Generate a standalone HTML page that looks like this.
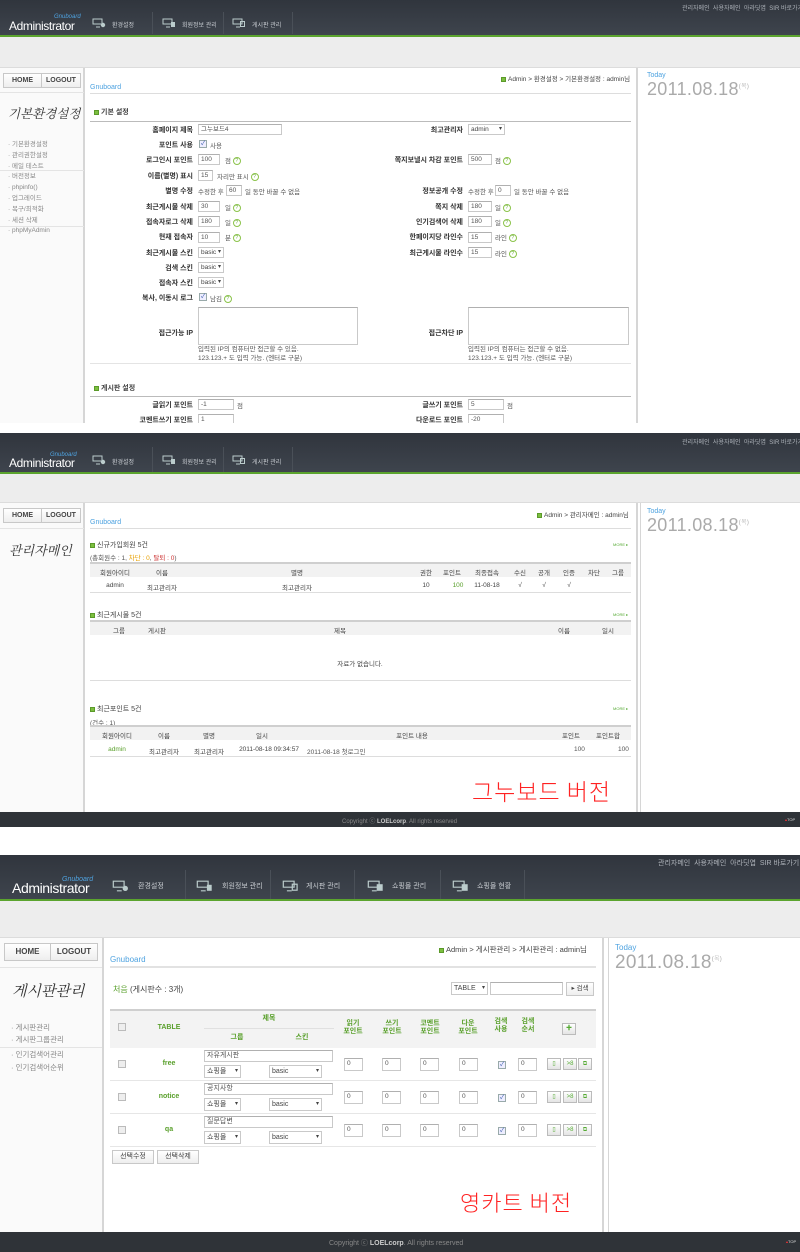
<!DOCTYPE html>
<html><head><meta charset="utf-8">
<style>
*{margin:0;padding:0;box-sizing:border-box}
body{width:800px;height:1252px;position:relative;background:#fff;font-family:"Liberation Sans","Noto Sans CJK KR",sans-serif;overflow:hidden;color:#333}
.a{position:absolute;white-space:nowrap}
.sec{position:absolute;left:0;width:800px;overflow:hidden;background:#fff}
.hd{position:absolute;left:0;top:0;width:800px;background:linear-gradient(#30353d,#3e444d);border-bottom:2px solid #5ba42e}
.band{position:absolute;left:0;width:800px;background:#ededed;border-bottom:1px solid #dcdcdc}
.tl{font-size:6px;color:#aeb3ba}
.logo{color:#fff;font-size:12px;letter-spacing:-0.4px}
.gnu{color:#4fa3e0;font-size:6px;font-style:italic}
.nv{font-size:6px;color:#c9cdd2}
.sep{position:absolute;width:1px;background:#4a5058}
.ic{position:absolute;width:14px;height:10px}
.side{position:absolute;left:0;background:#fafafa;border-right:2px solid #d6d6d6}
.btn{position:absolute;border:1px solid #c8c8c8;background:linear-gradient(#fff,#eee);font-size:7px;font-weight:bold;color:#444;text-align:center}
.cur{font-family:"Noto Serif CJK SC","Liberation Serif",serif;font-style:italic;color:#333}
.m{font-size:6.5px;color:#888}
.lab{font-size:7px;font-weight:bold;color:#333;text-align:right}
.in{position:absolute;border:1px solid #c9c9c9;border-top-color:#b0b0b0;background:#fff;font-size:6.5px;color:#555;padding-left:2px;line-height:9px;height:11px}
.t{font-size:6.5px;color:#555}
.q{display:inline-block;width:8px;height:8px;border:1px solid #8bc34a;border-radius:50%;font-size:5px;line-height:6px;text-align:center;color:#6a3;vertical-align:middle}
.cb{position:absolute;width:8px;height:8px;border:1px solid #9aa;background:#eef;font-size:6px;line-height:6px;color:#35a;text-align:center}
.sel{position:absolute;border:1px solid #c9c9c9;background:#fff;font-size:6.5px;color:#444;padding-left:2px;height:11px;line-height:9px}
.sel:after{content:"▾";position:absolute;right:2px;top:0;font-size:6px}
.hl{position:absolute;height:1px;background:#ccc}
.gb{color:#4fa3e0;font-size:7px}
.dot{display:inline-block;width:5px;height:5px;background:#7cbf3f;border:1px solid #5b9a2a;margin-right:2px;vertical-align:middle}
.bc{font-size:6.5px;color:#444}
.sh{font-size:7px;font-weight:bold;color:#444}
.today{color:#4fa3e0;font-size:7px}
.date{color:#aaa;font-weight:300;letter-spacing:0.3px}
.vb{position:absolute;width:2px;background:#d6d6d6}
.th{position:absolute;background:#f2f2f2;border-top:2px solid #cfcfcf}
.tc{font-size:6.5px;color:#444;transform:translateX(-50%)}
.ft{position:absolute;left:0;width:800px;background:#2f3338}
.red{color:#f22;font-family:"Noto Sans CJK KR",sans-serif;font-weight:300}
.g{color:#5aa02c}
.tb{font-size:7px;font-weight:bold;color:#5aa02c;transform:translateX(-50%);text-align:center;line-height:8px}
.ib{position:absolute;width:14px;height:12px;border:1px solid #bbb;background:linear-gradient(#fff,#e4e4e4);font-size:6px;text-align:center;line-height:10px;color:#5a3}
</style></head><body>

<!-- ========== SECTION 1 ========== -->
<div class="sec" style="top:0;height:423px">
 <div class="hd" style="height:37px"></div>
 <div class="a tl" style="left:682px;top:3px">관리자메인 &nbsp;사용자메인 &nbsp;아라딧엽 &nbsp;SIR 바로가기</div>
 <div class="a gnu" style="left:54px;top:14px">Gnuboard</div>
 <div class="a logo" style="left:9px;top:19px">Administrator</div>
 <svg class="ic" style="left:92px;top:18px" viewBox="0 0 14 10"><path d="M1 1h9v5H1zM4 9h4" stroke="#bcc" fill="none"/><circle cx="11" cy="7" r="2.2" fill="#bcc"/></svg>
 <div class="a nv" style="left:112px;top:20px">환경설정</div>
 <div class="sep" style="left:152px;top:12px;height:22px"></div>
 <svg class="ic" style="left:162px;top:18px" viewBox="0 0 14 10"><path d="M1 1h9v5H1zM4 9h4" stroke="#bcc" fill="none"/><rect x="9" y="4" width="4" height="5" fill="#bcc"/></svg>
 <div class="a nv" style="left:182px;top:20px">회원정보 관리</div>
 <div class="sep" style="left:223px;top:12px;height:22px"></div>
 <svg class="ic" style="left:232px;top:18px" viewBox="0 0 14 10"><path d="M1 1h9v5H1zM4 9h4" stroke="#bcc" fill="none"/><rect x="8.5" y="3.5" width="4" height="5" stroke="#bcc" fill="none"/></svg>
 <div class="a nv" style="left:252px;top:20px">게시판 관리</div>
 <div class="sep" style="left:292px;top:12px;height:22px"></div>
 <div class="band" style="top:37px;height:31px"></div>

 <div class="side" style="top:68px;width:85px;height:360px"></div>
 <div class="btn" style="left:3px;top:73px;width:39px;height:15px;line-height:13px">HOME</div>
 <div class="btn" style="left:41px;top:73px;width:40px;height:15px;line-height:13px">LOGOUT</div>
 <div class="hl" style="left:0;top:92px;width:84px;background:#e4e4e4"></div>
 <div class="a cur" style="left:8px;top:104px;font-size:12.5px">기본환경설정</div>
 <div class="a m" style="left:8px;top:139px;line-height:11px">· 기본환경설정<br>· 관리권한설정<br>· 메일 테스트</div>
 <div class="hl" style="left:0;top:170px;width:84px;background:#e4e4e4"></div>
 <div class="a m" style="left:8px;top:171px;line-height:11px">· 버전정보<br>· phpinfo()<br>· 업그레이드<br>· 복구/최적화<br>· 세션 삭제</div>
 <div class="hl" style="left:0;top:226px;width:84px;background:#e4e4e4"></div>
 <div class="a m" style="left:8px;top:227px">· phpMyAdmin</div>

 <div class="vb" style="left:636px;top:68px;height:360px"></div>
 <div class="a bc" style="left:501px;top:73px"><span class="dot"></span>Admin &gt; 환경설정 &gt; 기본환경설정 : admin님</div>
 <div class="a gb" style="left:90px;top:84px">Gnuboard</div>
 <div class="hl" style="left:90px;top:93px;width:541px;background:#ddd"></div>
 <div class="a sh" style="left:94px;top:107px"><span class="dot"></span>기본 설정</div>
 <div class="hl" style="left:90px;top:121px;width:541px;background:#bbb"></div>

 <div class="a lab" style="left:100px;width:93px;top:125px;line-height:12px">홈페이지 제목</div>
 <div class="a lab" style="left:100px;width:93px;top:140px">포인트 사용</div>
 <div class="a lab" style="left:100px;width:93px;top:155px">로그인시 포인트</div>
 <div class="a lab" style="left:100px;width:93px;top:171px">이름(별명) 표시</div>
 <div class="a lab" style="left:100px;width:93px;top:186px">별명 수정</div>
 <div class="a lab" style="left:100px;width:93px;top:202px">최근게시물 삭제</div>
 <div class="a lab" style="left:100px;width:93px;top:217px">접속자로그 삭제</div>
 <div class="a lab" style="left:100px;width:93px;top:232px">현재 접속자</div>
 <div class="a lab" style="left:100px;width:93px;top:248px">최근게시물 스킨</div>
 <div class="a lab" style="left:100px;width:93px;top:263px">검색 스킨</div>
 <div class="a lab" style="left:100px;width:93px;top:278px">접속자 스킨</div>
 <div class="a lab" style="left:100px;width:93px;top:293px">복사, 이동시 로그</div>
 <div class="a lab" style="left:100px;width:93px;top:328px">접근가능 IP</div>

 <div class="in" style="left:198px;top:124px;width:84px">그누보드4</div>
 <div class="cb" style="left:199px;top:140px">✓</div><div class="a t" style="left:210px;top:140px">사용</div>
 <div class="in" style="left:198px;top:154px;width:22px">100</div><div class="a t" style="left:225px;top:155px">점 <span class="q">?</span></div>
 <div class="in" style="left:198px;top:170px;width:15px">15</div><div class="a t" style="left:217px;top:171px">자리만 표시 <span class="q">?</span></div>
 <div class="a t" style="left:198px;top:186px">수정한 후</div><div class="in" style="left:226px;top:185px;width:16px">60</div><div class="a t" style="left:245px;top:186px">일 동안 바꿀 수 없음</div>
 <div class="in" style="left:198px;top:201px;width:22px">30</div><div class="a t" style="left:225px;top:202px">일 <span class="q">?</span></div>
 <div class="in" style="left:198px;top:216px;width:22px">180</div><div class="a t" style="left:225px;top:217px">일 <span class="q">?</span></div>
 <div class="in" style="left:198px;top:232px;width:22px">10</div><div class="a t" style="left:225px;top:232px">분 <span class="q">?</span></div>
 <div class="sel" style="left:198px;top:247px;width:26px">basic</div>
 <div class="sel" style="left:198px;top:262px;width:26px">basic</div>
 <div class="sel" style="left:198px;top:277px;width:26px">basic</div>
 <div class="cb" style="left:199px;top:293px">✓</div><div class="a t" style="left:210px;top:293px">남김 <span class="q">?</span></div>
 <div class="in" style="left:198px;top:307px;width:160px;height:38px"></div>
 <div class="a t" style="left:198px;top:345px;line-height:9px">입력된 IP의 컴퓨터만 접근할 수 있음.<br>123.123.+ 도 입력 가능. (엔터로 구분)</div>

 <div class="a lab" style="left:350px;width:113px;top:125px">최고관리자</div>
 <div class="a lab" style="left:350px;width:113px;top:155px">쪽지보낼시 차감 포인트</div>
 <div class="a lab" style="left:350px;width:113px;top:186px">정보공개 수정</div>
 <div class="a lab" style="left:350px;width:113px;top:202px">쪽지 삭제</div>
 <div class="a lab" style="left:350px;width:113px;top:217px">인기검색어 삭제</div>
 <div class="a lab" style="left:350px;width:113px;top:232px">한페이지당 라인수</div>
 <div class="a lab" style="left:350px;width:113px;top:248px">최근게시물 라인수</div>
 <div class="a lab" style="left:350px;width:113px;top:328px">접근차단 IP</div>
 <div class="sel" style="left:468px;top:124px;width:37px">admin</div>
 <div class="in" style="left:468px;top:154px;width:24px">500</div><div class="a t" style="left:495px;top:155px">점 <span class="q">?</span></div>
 <div class="a t" style="left:468px;top:186px">수정한 후</div><div class="in" style="left:495px;top:185px;width:16px">0</div><div class="a t" style="left:514px;top:186px">일 동안 바꿀 수 없음</div>
 <div class="in" style="left:468px;top:201px;width:24px">180</div><div class="a t" style="left:495px;top:202px">일 <span class="q">?</span></div>
 <div class="in" style="left:468px;top:216px;width:24px">180</div><div class="a t" style="left:495px;top:217px">일 <span class="q">?</span></div>
 <div class="in" style="left:468px;top:232px;width:24px">15</div><div class="a t" style="left:495px;top:232px">라인 <span class="q">?</span></div>
 <div class="in" style="left:468px;top:247px;width:24px">15</div><div class="a t" style="left:495px;top:248px">라인 <span class="q">?</span></div>
 <div class="in" style="left:468px;top:307px;width:161px;height:38px"></div>
 <div class="a t" style="left:468px;top:345px;line-height:9px">입력된 IP의 컴퓨터는 접근할 수 없음.<br>123.123.+ 도 입력 가능. (엔터로 구분)</div>

 <div class="hl" style="left:90px;top:363px;width:541px;background:#e4e4e4"></div>
 <div class="a sh" style="left:94px;top:383px"><span class="dot"></span>게시판 설정</div>
 <div class="hl" style="left:90px;top:396px;width:541px;background:#bbb"></div>
 <div class="a lab" style="left:100px;width:93px;top:400px">글읽기 포인트</div>
 <div class="in" style="left:198px;top:399px;width:36px">-1</div><div class="a t" style="left:237px;top:400px">점</div>
 <div class="a lab" style="left:100px;width:93px;top:415px">코멘트쓰기 포인트</div>
 <div class="in" style="left:198px;top:414px;width:36px">1</div>
 <div class="a lab" style="left:350px;width:113px;top:400px">글쓰기 포인트</div>
 <div class="in" style="left:468px;top:399px;width:36px">5</div><div class="a t" style="left:507px;top:400px">점</div>
 <div class="a lab" style="left:350px;width:113px;top:415px">다운로드 포인트</div>
 <div class="in" style="left:468px;top:414px;width:36px">-20</div>

 <div class="a today" style="left:647px;top:72px">Today</div>
 <div class="a date" style="left:647px;top:79px;font-size:18px">2011.08.18<sup style="font-size:6px">(목)</sup></div>
</div>

<!-- ========== SECTION 2 ========== -->
<div class="sec" style="top:433px;height:394px">
 <div class="hd" style="height:41px"></div>
 <div class="a tl" style="left:682px;top:4px">관리자메인 &nbsp;사용자메인 &nbsp;아라딧엽 &nbsp;SIR 바로가기</div>
 <div class="a gnu" style="left:50px;top:19px">Gnuboard</div>
 <div class="a logo" style="left:9px;top:23px">Administrator</div>
 <svg class="ic" style="left:92px;top:22px" viewBox="0 0 14 10"><path d="M1 1h9v5H1zM4 9h4" stroke="#bcc" fill="none"/><circle cx="11" cy="7" r="2.2" fill="#bcc"/></svg>
 <div class="a nv" style="left:112px;top:24px">환경설정</div>
 <div class="sep" style="left:152px;top:14px;height:25px"></div>
 <svg class="ic" style="left:162px;top:22px" viewBox="0 0 14 10"><path d="M1 1h9v5H1zM4 9h4" stroke="#bcc" fill="none"/><rect x="9" y="4" width="4" height="5" fill="#bcc"/></svg>
 <div class="a nv" style="left:182px;top:24px">회원정보 관리</div>
 <div class="sep" style="left:223px;top:14px;height:25px"></div>
 <svg class="ic" style="left:232px;top:22px" viewBox="0 0 14 10"><path d="M1 1h9v5H1zM4 9h4" stroke="#bcc" fill="none"/><rect x="8.5" y="3.5" width="4" height="5" stroke="#bcc" fill="none"/></svg>
 <div class="a nv" style="left:252px;top:24px">게시판 관리</div>
 <div class="sep" style="left:292px;top:14px;height:25px"></div>
 <div class="band" style="top:41px;height:29px"></div>

 <div class="side" style="top:70px;width:85px;height:310px"></div>
 <div class="btn" style="left:3px;top:75px;width:39px;height:15px;line-height:13px">HOME</div>
 <div class="btn" style="left:41px;top:75px;width:40px;height:15px;line-height:13px">LOGOUT</div>
 <div class="hl" style="left:0;top:95px;width:84px;background:#e4e4e4"></div>
 <div class="a cur" style="left:9px;top:107px;font-size:13px">관리자메인</div>
 <div class="vb" style="left:636px;top:70px;height:310px"></div>
 <div class="vb" style="left:640px;top:70px;height:310px;width:1px"></div>

 <div class="a bc" style="left:537px;top:76px"><span class="dot"></span>Admin &gt; 관리자메인 : admin님</div>
 <div class="a gb" style="left:90px;top:86px">Gnuboard</div>
 <div class="hl" style="left:90px;top:95px;width:541px;background:#ddd"></div>

 <div class="a sh" style="left:90px;top:107px;font-weight:normal"><span class="dot"></span>신규가입회원 5건</div>
 <div class="a" style="left:613px;top:109px;font-size:4px;color:#5a3">MORE ▸</div>
 <div class="a t" style="left:90px;top:119px">(총회원수 : 1, <span style="color:#e8a000">차단 : 0</span>, <span style="color:#c33">탈퇴 : 0</span>)</div>
 <div class="th" style="left:90px;top:129px;width:541px;height:15px"></div>
 <div class="a tc" style="left:115px;top:134px">회원아이디</div><div class="a tc" style="left:162px;top:134px">이름</div><div class="a tc" style="left:297px;top:134px">별명</div><div class="a tc" style="left:426px;top:134px">권한</div><div class="a tc" style="left:452px;top:134px">포인트</div><div class="a tc" style="left:487px;top:134px">최종접속</div><div class="a tc" style="left:520px;top:134px">수신</div><div class="a tc" style="left:544px;top:134px">공개</div><div class="a tc" style="left:569px;top:134px">인증</div><div class="a tc" style="left:594px;top:134px">차단</div><div class="a tc" style="left:618px;top:134px">그룹</div>
 <div class="a tc" style="left:115px;top:149px">admin</div><div class="a tc" style="left:162px;top:149px">최고관리자</div><div class="a tc" style="left:297px;top:149px">최고관리자</div><div class="a tc" style="left:426px;top:149px">10</div><div class="a tc g" style="left:458px;top:149px;color:#5aa02c">100</div><div class="a tc" style="left:487px;top:149px">11-08-18</div><div class="a tc" style="left:520px;top:149px">√</div><div class="a tc" style="left:544px;top:149px">√</div><div class="a tc" style="left:569px;top:149px">√</div>
 <div class="hl" style="left:90px;top:159px;width:541px;background:#ddd"></div>

 <div class="a sh" style="left:90px;top:177px;font-weight:normal"><span class="dot"></span>최근게시물 5건</div>
 <div class="a" style="left:613px;top:179px;font-size:4px;color:#5a3">MORE ▸</div>
 <div class="th" style="left:90px;top:187px;width:541px;height:15px"></div>
 <div class="a tc" style="left:119px;top:192px">그룹</div><div class="a tc" style="left:157px;top:192px">게시판</div><div class="a tc" style="left:340px;top:192px">제목</div><div class="a tc" style="left:564px;top:192px">이름</div><div class="a tc" style="left:608px;top:192px">일시</div>
 <div class="a tc" style="left:360px;top:225px">자료가 없습니다.</div>
 <div class="hl" style="left:90px;top:247px;width:541px;background:#ddd"></div>

 <div class="a sh" style="left:90px;top:271px;font-weight:normal"><span class="dot"></span>최근포인트 5건</div>
 <div class="a" style="left:613px;top:273px;font-size:4px;color:#5a3">MORE ▸</div>
 <div class="a t" style="left:90px;top:284px">(건수 : 1)</div>
 <div class="th" style="left:90px;top:292px;width:541px;height:15px"></div>
 <div class="a tc" style="left:117px;top:297px">회원아이디</div><div class="a tc" style="left:164px;top:297px">이름</div><div class="a tc" style="left:209px;top:297px">별명</div><div class="a tc" style="left:262px;top:297px">일시</div><div class="a tc" style="left:412px;top:297px">포인트 내용</div><div class="a tc" style="left:571px;top:297px">포인트</div><div class="a tc" style="left:608px;top:297px">포인트합</div>
 <div class="a tc g" style="left:117px;top:313px;color:#5aa02c">admin</div><div class="a tc" style="left:164px;top:313px">최고관리자</div><div class="a tc" style="left:209px;top:313px">최고관리자</div><div class="a tc" style="left:269px;top:313px">2011-08-18 09:34:57</div><div class="a t" style="left:307px;top:313px">2011-08-18 첫로그인</div><div class="a t" style="left:574px;top:313px">100</div><div class="a t" style="left:618px;top:313px">100</div>
 <div class="hl" style="left:90px;top:323px;width:541px;background:#ddd"></div>

 <div class="a red" style="left:472px;top:340px;font-size:23px;letter-spacing:1px">그누보드 버전</div>

 <div class="a today" style="left:647px;top:75px">Today</div>
 <div class="a date" style="left:647px;top:82px;font-size:18px">2011.08.18<sup style="font-size:6px">(목)</sup></div>
 <div class="ft" style="top:379px;height:15px"></div>
 <div class="a" style="left:342px;top:383px;font-size:6px;color:#888">Copyright ⓒ <b style="color:#ccc">LOELcorp</b>. All rights reserved</div>
 <div class="a" style="left:785px;top:384px;font-size:4px;color:#ddd"><span style="color:#f33">▴</span>TOP</div>
</div>

<!-- ========== SECTION 3 ========== -->
<div class="sec" style="top:855px;height:397px">
 <div class="hd" style="height:46px"></div>
 <div class="a tl" style="left:658px;top:3px;font-size:7px">관리자메인 &nbsp;사용자메인 &nbsp;아라딧엽 &nbsp;SIR 바로가기</div>
 <div class="a gnu" style="left:62px;top:21px;font-size:7px">Gnuboard</div>
 <div class="a logo" style="left:12px;top:25px;font-size:14px">Administrator</div>
 <svg class="ic" style="left:112px;top:25px;width:17px;height:12px" viewBox="0 0 14 10"><path d="M1 1h9v5H1zM4 9h4" stroke="#bcc" fill="none"/><circle cx="11" cy="7" r="2.2" fill="#bcc"/></svg>
 <div class="a nv" style="left:138px;top:26px;font-size:7px">환경설정</div>
 <div class="sep" style="left:185px;top:15px;height:29px"></div>
 <svg class="ic" style="left:196px;top:25px;width:17px;height:12px" viewBox="0 0 14 10"><path d="M1 1h9v5H1zM4 9h4" stroke="#bcc" fill="none"/><rect x="9" y="4" width="4" height="5" fill="#bcc"/></svg>
 <div class="a nv" style="left:222px;top:26px;font-size:7px">회원정보 관리</div>
 <div class="sep" style="left:270px;top:15px;height:29px"></div>
 <svg class="ic" style="left:282px;top:25px;width:17px;height:12px" viewBox="0 0 14 10"><path d="M1 1h9v5H1zM4 9h4" stroke="#bcc" fill="none"/><rect x="8.5" y="3.5" width="4" height="5" stroke="#bcc" fill="none"/></svg>
 <div class="a nv" style="left:306px;top:26px;font-size:7px">게시판 관리</div>
 <div class="sep" style="left:354px;top:15px;height:29px"></div>
 <svg class="ic" style="left:367px;top:25px;width:17px;height:12px" viewBox="0 0 14 10"><path d="M1 1h9v5H1zM4 9h4" stroke="#bcc" fill="none"/><rect x="8" y="3.5" width="5" height="5.5" fill="#bcc"/></svg>
 <div class="a nv" style="left:392px;top:26px;font-size:7px">쇼핑몰 관리</div>
 <div class="sep" style="left:440px;top:15px;height:29px"></div>
 <svg class="ic" style="left:452px;top:25px;width:17px;height:12px" viewBox="0 0 14 10"><path d="M1 1h9v5H1zM4 9h4" stroke="#bcc" fill="none"/><rect x="8" y="3.5" width="5" height="5.5" fill="#bcc"/></svg>
 <div class="a nv" style="left:477px;top:26px;font-size:7px">쇼핑몰 현황</div>
 <div class="sep" style="left:524px;top:15px;height:29px"></div>
 <div class="band" style="top:46px;height:37px"></div>

 <div class="side" style="top:83px;width:104px;height:300px"></div>
 <div class="btn" style="left:4px;top:88px;width:47px;height:18px;line-height:16px;font-size:8px">HOME</div>
 <div class="btn" style="left:50px;top:88px;width:48px;height:18px;line-height:16px;font-size:8px">LOGOUT</div>
 <div class="hl" style="left:0;top:112px;width:102px;background:#e4e4e4"></div>
 <div class="a cur" style="left:12px;top:125px;font-size:15px">게시판관리</div>
 <div class="a m" style="left:11px;top:167px;line-height:12px;font-size:7.5px">· 게시판관리<br>· 게시판그룹관리</div>
 <div class="hl" style="left:0;top:192px;width:102px;background:#e4e4e4"></div>
 <div class="a m" style="left:11px;top:193px;line-height:13px;font-size:7.5px">· 인기검색어관리<br>· 인기검색어순위</div>

 <div class="vb" style="left:602px;top:83px;height:300px"></div>
 <div class="vb" style="left:608px;top:83px;height:300px;width:1px"></div>

 <div class="a bc" style="left:439px;top:89px;font-size:7.5px"><span class="dot"></span>Admin &gt; 게시판관리 &gt; 게시판관리 : admin님</div>
 <div class="a gb" style="left:110px;top:100px;font-size:8px">Gnuboard</div>
 <div class="hl" style="left:110px;top:111px;width:486px;height:2px;background:#e2e2e2"></div>

 <div class="a" style="left:113px;top:129px;font-size:8px;color:#444"><span class="g">처음</span> (게시판수 : 3개)</div>
 <div class="sel" style="left:451px;top:127px;width:37px;height:13px;line-height:11px;font-size:7px">TABLE</div>
 <div class="in" style="left:490px;top:127px;width:73px;height:13px"></div>
 <div class="btn" style="left:566px;top:127px;width:28px;height:14px;line-height:12px;font-weight:normal;font-size:6.5px">▸ 검색</div>

 <div class="th" style="left:110px;top:154px;width:486px;height:39px;background:#f3f3f3"></div>
 <div class="hl" style="left:204px;top:173px;width:130px;background:#e0e0e0"></div>
 <div class="cb" style="left:118px;top:168px;background:#eee;border-color:#bbb"></div>
 <div class="a tb" style="left:169px;top:169px">TABLE</div>
 <div class="a tb" style="left:269px;top:160px">제목</div>
 <div class="a tb" style="left:237px;top:179px">그룹</div>
 <div class="a tb" style="left:302px;top:179px">스킨</div>
 <div class="a tb" style="left:353px;top:165px">읽기<br>포인트</div>
 <div class="a tb" style="left:392px;top:165px">쓰기<br>포인트</div>
 <div class="a tb" style="left:430px;top:165px">코멘트<br>포인트</div>
 <div class="a tb" style="left:468px;top:165px">다운<br>포인트</div>
 <div class="a tb" style="left:501px;top:163px">검색<br>사용</div>
 <div class="a tb" style="left:528px;top:163px">검색<br>순서</div>
 <div class="ib" style="left:562px;top:168px">✚</div>

 <div class="hl" style="left:110px;top:225px;width:486px;background:#e6e6e6"></div>
 <div class="hl" style="left:110px;top:258px;width:486px;background:#e6e6e6"></div>
 <div class="hl" style="left:110px;top:291px;width:486px;background:#e6e6e6"></div>

 <div class="cb" style="left:118px;top:205px;background:#eee;border-color:#bbb"></div>
 <div class="a tb" style="left:169px;top:205px">free</div>
 <div class="in" style="left:204px;top:195px;width:129px;height:12px;font-size:7px">자유게시판</div>
 <div class="sel" style="left:204px;top:210px;width:37px;height:13px;line-height:11px;font-size:7px">쇼핑몰</div>
 <div class="sel" style="left:269px;top:210px;width:53px;height:13px;line-height:11px;font-size:7px">basic</div>

 <div class="cb" style="left:118px;top:238px;background:#eee;border-color:#bbb"></div>
 <div class="a tb" style="left:169px;top:238px">notice</div>
 <div class="in" style="left:204px;top:228px;width:129px;height:12px;font-size:7px">공지사항</div>
 <div class="sel" style="left:204px;top:243px;width:37px;height:13px;line-height:11px;font-size:7px">쇼핑몰</div>
 <div class="sel" style="left:269px;top:243px;width:53px;height:13px;line-height:11px;font-size:7px">basic</div>

 <div class="cb" style="left:118px;top:271px;background:#eee;border-color:#bbb"></div>
 <div class="a tb" style="left:169px;top:271px">qa</div>
 <div class="in" style="left:204px;top:261px;width:129px;height:12px;font-size:7px">질문답변</div>
 <div class="sel" style="left:204px;top:276px;width:37px;height:13px;line-height:11px;font-size:7px">쇼핑몰</div>
 <div class="sel" style="left:269px;top:276px;width:53px;height:13px;line-height:11px;font-size:7px">basic</div>

 <div class="in" style="left:344px;top:203px;width:19px;height:13px">0</div><div class="in" style="left:382px;top:203px;width:19px;height:13px">0</div><div class="in" style="left:420px;top:203px;width:19px;height:13px">0</div><div class="in" style="left:459px;top:203px;width:19px;height:13px">0</div><div class="cb" style="left:498px;top:206px">✓</div><div class="in" style="left:518px;top:203px;width:19px;height:13px">0</div>
 <div class="ib" style="left:547px;top:203px">▯</div><div class="ib" style="left:563px;top:203px">&gt;8</div><div class="ib" style="left:578px;top:203px">⧉</div>

 <div class="in" style="left:344px;top:236px;width:19px;height:13px">0</div><div class="in" style="left:382px;top:236px;width:19px;height:13px">0</div><div class="in" style="left:420px;top:236px;width:19px;height:13px">0</div><div class="in" style="left:459px;top:236px;width:19px;height:13px">0</div><div class="cb" style="left:498px;top:239px">✓</div><div class="in" style="left:518px;top:236px;width:19px;height:13px">0</div>
 <div class="ib" style="left:547px;top:236px">▯</div><div class="ib" style="left:563px;top:236px">&gt;8</div><div class="ib" style="left:578px;top:236px">⧉</div>

 <div class="in" style="left:344px;top:269px;width:19px;height:13px">0</div><div class="in" style="left:382px;top:269px;width:19px;height:13px">0</div><div class="in" style="left:420px;top:269px;width:19px;height:13px">0</div><div class="in" style="left:459px;top:269px;width:19px;height:13px">0</div><div class="cb" style="left:498px;top:272px">✓</div><div class="in" style="left:518px;top:269px;width:19px;height:13px">0</div>
 <div class="ib" style="left:547px;top:269px">▯</div><div class="ib" style="left:563px;top:269px">&gt;8</div><div class="ib" style="left:578px;top:269px">⧉</div>

 <div class="btn" style="left:112px;top:295px;width:42px;height:14px;line-height:12px;font-weight:normal;font-size:7px">선택수정</div>
 <div class="btn" style="left:157px;top:295px;width:42px;height:14px;line-height:12px;font-weight:normal;font-size:7px">선택삭제</div>

 <div class="a red" style="left:460px;top:331px;font-size:22px;letter-spacing:1px">영카트 버전</div>

 <div class="a today" style="left:615px;top:88px;font-size:8px">Today</div>
 <div class="a date" style="left:615px;top:97px;font-size:19px">2011.08.18<sup style="font-size:6px">(목)</sup></div>
 <div class="ft" style="top:377px;height:20px"></div>
 <div class="a" style="left:329px;top:383px;font-size:7px;color:#888">Copyright ⓒ <b style="color:#ccc">LOELcorp</b>. All rights reserved</div>
 <div class="a" style="left:786px;top:384px;font-size:4px;color:#ddd"><span style="color:#f33">▴</span>TOP</div>
</div>
</body></html>
